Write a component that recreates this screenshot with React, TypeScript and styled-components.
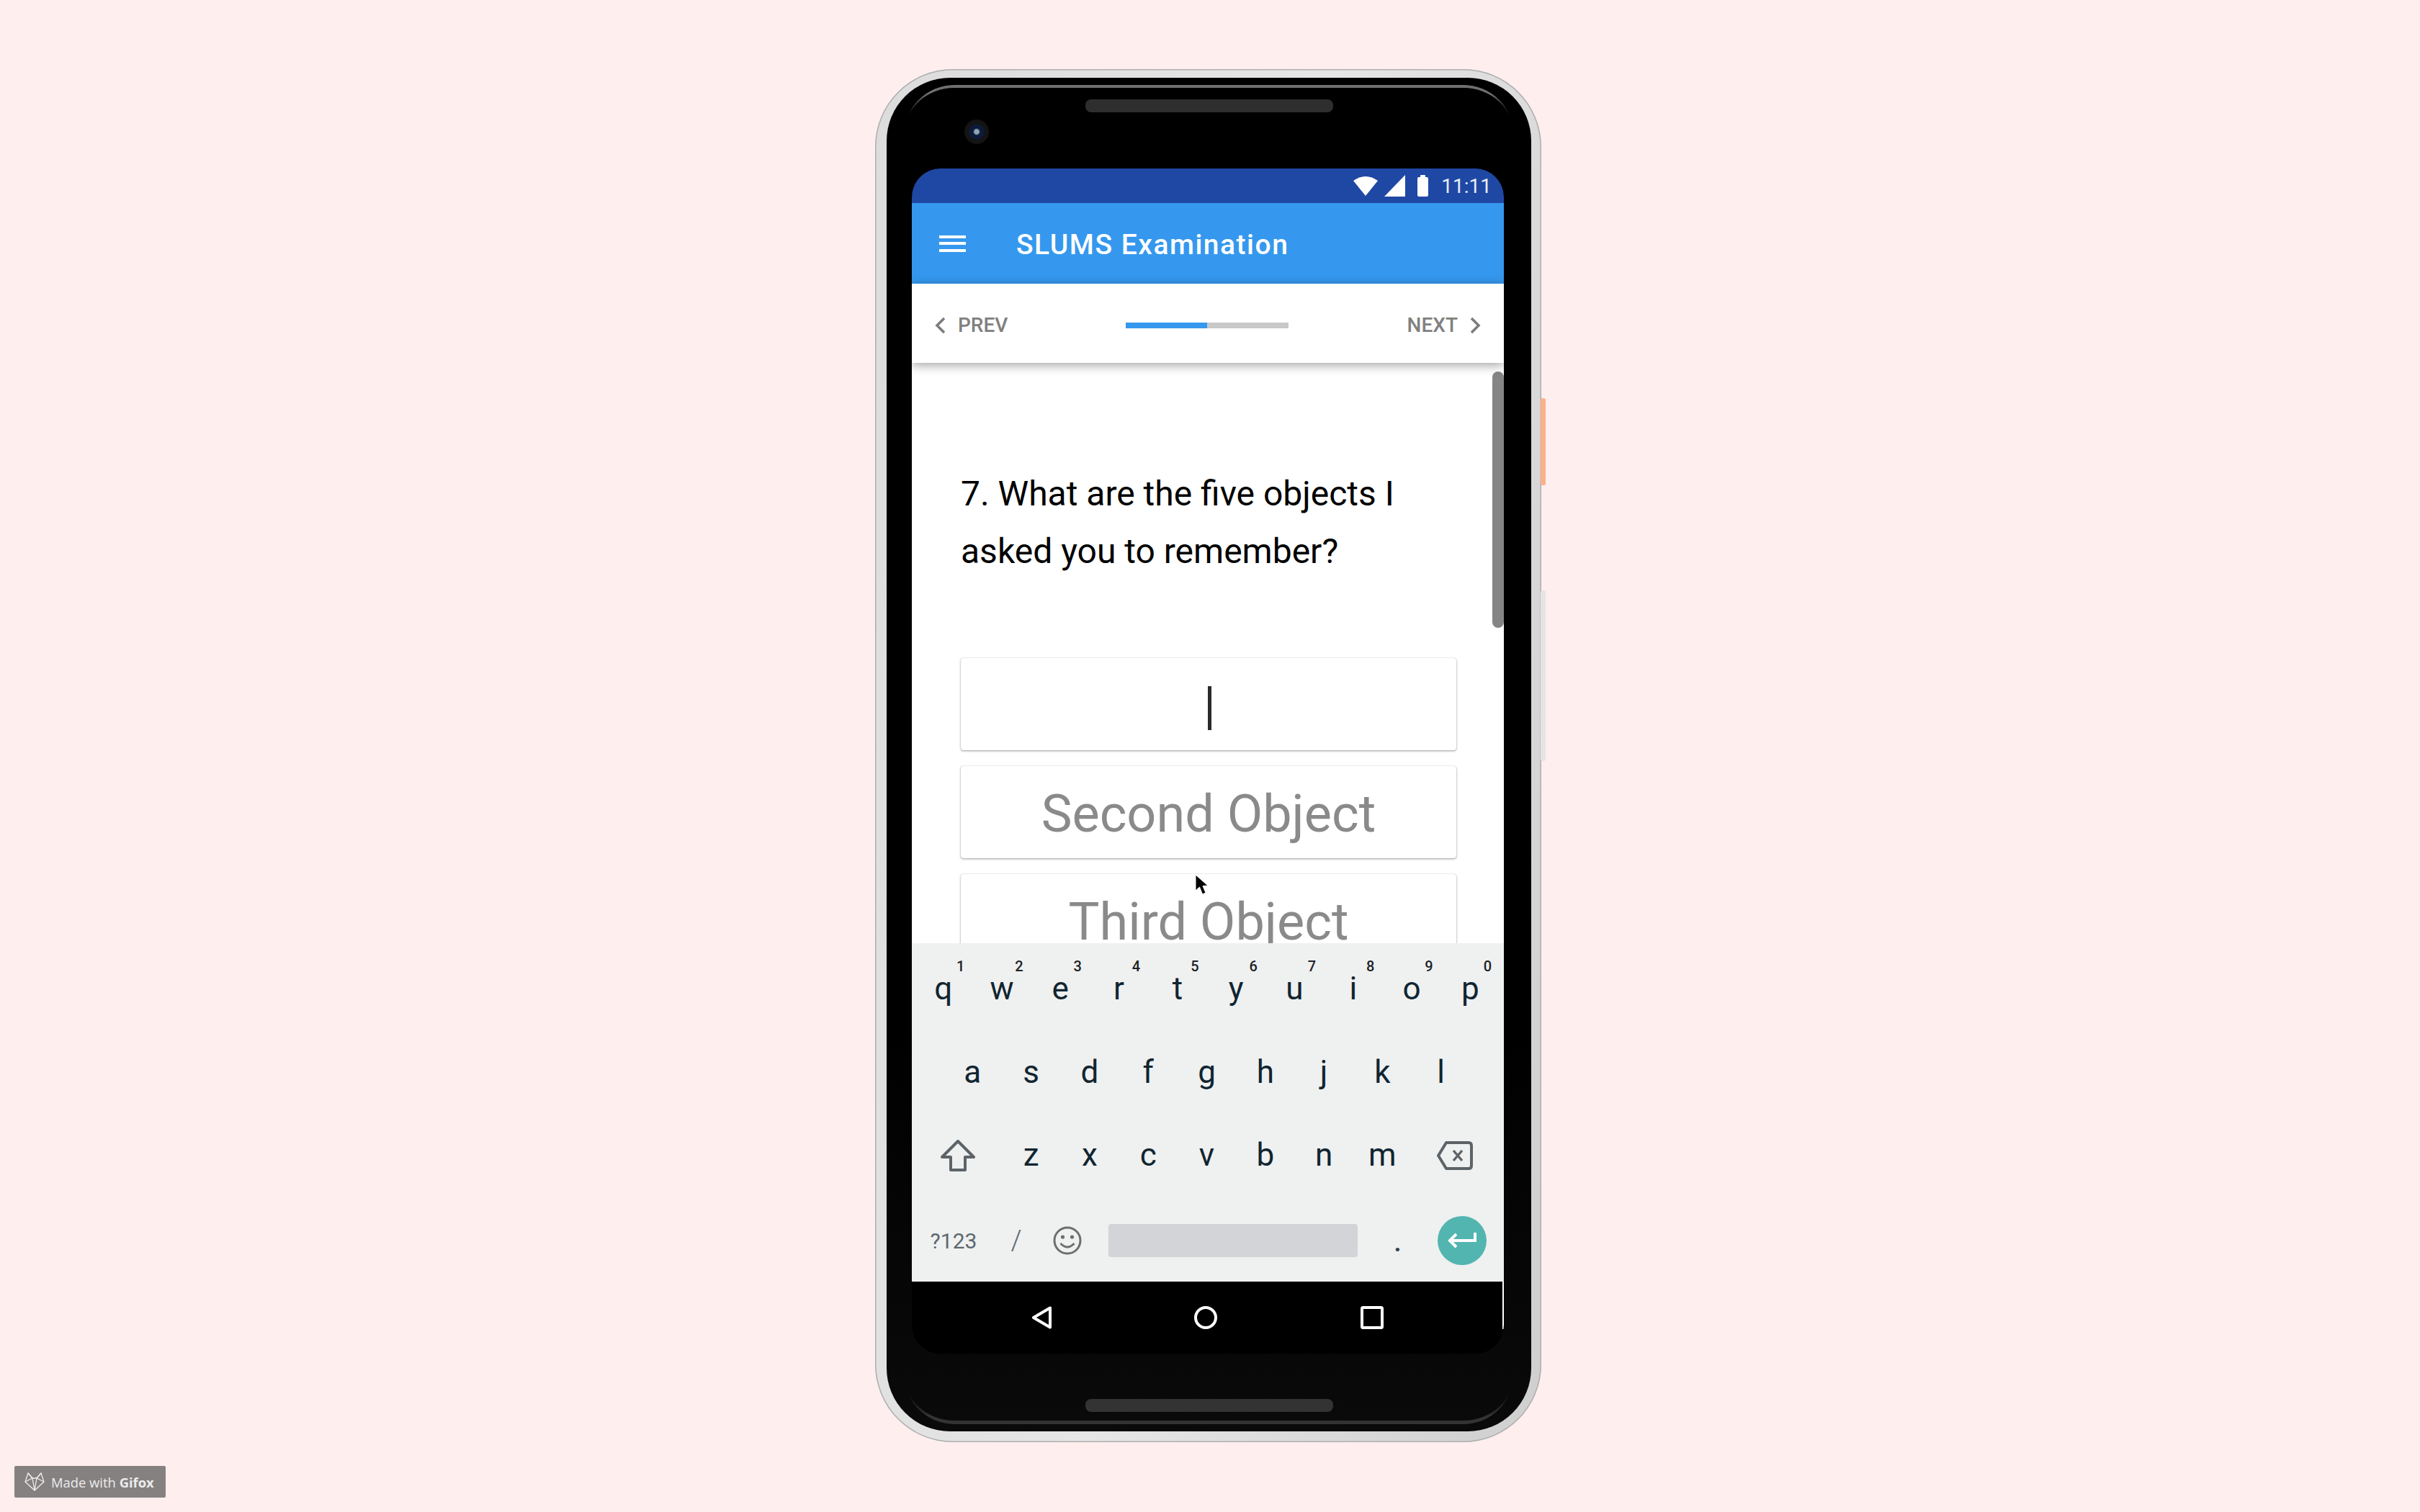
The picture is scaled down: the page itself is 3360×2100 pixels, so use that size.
import styled, { createGlobalStyle } from "styled-components";

const GlobalStyle = createGlobalStyle`
    html, body { margin: 0; padding: 0; background: #ffeeee; }
    * { box-sizing: border-box; }
`;

const Page = styled.div`
    position: relative;
    width: 3360px;
    height: 2100px;
    padding: 96px 0 0 1215px;
    background: #ffeeee;
    font-family: Roboto, "Liberation Sans", sans-serif;
    overflow: hidden;
`;

const Phone = styled.div`
    position: relative;
    width: 925px;
    height: 1907px;
    padding: 12px 14px 15px 16px;
    border-radius: 108px / 108px;
    background: linear-gradient(100deg, #dcdcdc 0%, #e6e6e6 50%, #cfcfcf 100%);
    box-shadow: inset 0 0 0 1.5px #aeaeae;
`;

const SideButton = styled.div<{ $top: number; $height: number; $color: string }>`
    position: absolute;
    right: -6px;
    top: ${(p) => p.$top}px;
    width: 7px;
    height: ${(p) => p.$height}px;
    border-radius: 3px;
    background: ${(p) => p.$color};
`;

const Bezel = styled.div`
    position: relative;
    height: 100%;
    border-radius: 88px;
    background: linear-gradient(180deg, #000 0%, #000 70%, #0a0a0a 100%);
    display: flex;
    flex-direction: column;
    align-items: center;
    overflow: hidden;
    &::before {
        content: "";
        position: absolute;
        top: 10px;
        left: 24px;
        right: 24px;
        height: 80px;
        border-top: 4px solid #707070;
        border-radius: 70px 70px 0 0;
        -webkit-mask-image: linear-gradient(180deg, #000 0, #000 12px, transparent 44px);
    }
    &::after {
        content: "";
        position: absolute;
        bottom: 10px;
        left: 24px;
        right: 24px;
        height: 80px;
        border-bottom: 5px solid #333;
        border-radius: 0 0 70px 70px;
        -webkit-mask-image: linear-gradient(0deg, #000 0, #000 12px, transparent 44px);
    }
`;

const TopBezel = styled.div`
    position: relative;
    width: 100%;
    height: 126px;
    flex: none;
    padding-top: 30px;
    display: flex;
    justify-content: center;
`;

const Speaker = styled.div<{ $color: string }>`
    width: 344px;
    height: 18px;
    border-radius: 8px;
    background: ${(p) => p.$color};
`;

const Camera = styled.div`
    position: absolute;
    left: 108px;
    top: 58px;
    width: 34px;
    height: 34px;
    border-radius: 50%;
    background: radial-gradient(circle, #8fa6b0 0 3px, #0c1a3a 5px 10px, #141414 11px 17px);
`;

const Screen = styled.div`
    width: 822px;
    height: 1646px;
    margin-left: -3px;
    flex: none;
    display: flex;
    flex-direction: column;
    border-radius: 40px;
    overflow: hidden;
    background: #000;
`;

const StatusBar = styled.div`
    height: 48px;
    flex: none;
    background: #1f48a4;
    display: flex;
    align-items: center;
    justify-content: flex-end;
    padding-right: 17px;
    color: #e8edf7;
    font-size: 28px;
`;

const StatusIcon = styled.svg<{ $gap: number }>`
    display: block;
    margin-right: ${(p) => p.$gap}px;
`;

const AppBar = styled.div`
    height: 112px;
    flex: none;
    background: #3598ee;
    display: flex;
    align-items: center;
    padding-left: 38px;
    color: #fff;
`;

const MenuIcon = styled.div`
    width: 37px;
    display: flex;
    flex-direction: column;
    gap: 5.5px;
    margin-right: 70px;
    span {
        display: block;
        height: 4px;
        background: #fff;
    }
`;

const Title = styled.div`
    padding-top: 3px;
    font-size: 39px;
    font-weight: 500;
    letter-spacing: 1.5px;
    white-space: nowrap;
`;

const NavRow = styled.div`
    position: relative;
    z-index: 2;
    height: 110px;
    flex: none;
    padding: 5px 32px 0;
    background: #fff;
    display: flex;
    align-items: center;
    justify-content: space-between;
    color: #808080;
    font-size: 28px;
    font-weight: 500;
    box-shadow: 0 3px 14px rgba(0, 0, 0, 0.38);
`;

const NavButton = styled.div`
    display: flex;
    align-items: center;
    gap: 16px;
    width: 140px;
`;

const NextButton = styled(NavButton)`
    justify-content: flex-end;
`;

const Progress = styled.div`
    width: 226px;
    height: 8px;
    margin-left: -3px;
    background: #c8c8c8;
`;

const ProgressFill = styled.div`
    height: 100%;
    background: #3598ee;
`;

const Content = styled.div`
    position: relative;
    flex: 1;
    min-height: 0;
    overflow: hidden;
    padding: 142px 66px 0 68px;
    background: #fff;
`;

const Scrollbar = styled.div`
    position: absolute;
    top: 12px;
    right: 0;
    width: 16px;
    height: 356px;
    border-radius: 8px;
    background: #858585;
`;

const Question = styled.div`
    font-size: 48px;
    line-height: 80px;
    color: #000;
    height: 160px;
    margin-bottom: 108px;
    white-space: nowrap;
`;

const Field = styled.div`
    height: 128px;
    margin-bottom: 22px;
    padding-top: 4px;
    border-radius: 4px;
    background: #fff;
    box-shadow: 0 1px 3px rgba(0, 0, 0, 0.4), 0 0 1px rgba(0, 0, 0, 0.2);
    display: flex;
    align-items: center;
    justify-content: center;
    color: #8a8a8a;
    font-size: 72px;
    white-space: nowrap;
`;

const Caret = styled.div`
    width: 5px;
    height: 61px;
    margin: 6px 0 0 2px;
    background: #2a2a2a;
`;

const Pointer = styled.svg`
    position: absolute;
    left: 393px;
    top: 710px;
`;

const Keyboard = styled.div`
    height: 470px;
    flex: none;
    padding-top: 6px;
    background: #eff0f0;
`;

const KeyRow = styled.div`
    height: 115.5px;
    padding-right: 3px;
    display: flex;
    justify-content: center;
`;

const Key = styled.div`
    position: relative;
    width: 81.3px;
    text-align: center;
    color: #102530;
    font-size: 44px;
    line-height: 115.5px;
`;

const Digit = styled.span`
    position: absolute;
    top: 14px;
    left: calc(50% + 24px);
    transform: translateX(-50%);
    color: #1c2226;
    font-size: 20px;
    font-weight: 500;
    line-height: 24px;
`;

const IconKey = styled.div<{ $shift?: number }>`
    width: 122.8px;
    padding-right: ${(p) => p.$shift || 0}px;
    display: flex;
    align-items: center;
    justify-content: center;
`;

const BottomRow = styled.div`
    display: flex;
    align-items: center;
    height: 117.5px;
    padding-top: 4px;
    color: #5d686e;
`;

const SymbolKey = styled.div`
    width: 116px;
    text-align: center;
    font-size: 30px;
`;

const SlashKey = styled.div`
    width: 58px;
    text-align: center;
    font-size: 38px;
    font-weight: 300;
`;

const EmojiKey = styled.div`
    width: 84px;
    margin-right: 14.5px;
    display: flex;
    justify-content: center;
`;

const SpaceBar = styled.div`
    width: 346.5px;
    height: 46px;
    border-radius: 4px;
    background: #d2d4d8;
`;

const DotKey = styled.div`
    width: 111px;
    text-align: center;
    color: #33434b;
    font-size: 38px;
    font-weight: 500;
    padding-top: 4px;
`;

const EnterKey = styled.div`
    width: 68px;
    height: 68px;
    border-radius: 50%;
    background: #52b5b0;
    display: flex;
    align-items: center;
    justify-content: center;
`;

const NavBar = styled.div`
    position: relative;
    height: 100px;
    flex: none;
    background: #000;
    display: flex;
    padding-top: 34px;
    align-items: flex-start;
    &::after {
        content: "";
        position: absolute;
        top: 0;
        right: 0;
        width: 2px;
        height: 66px;
        background: #fff;
    }
`;

const NavIcon = styled.svg<{ $left: number }>`
    display: block;
    margin-left: ${(p) => p.$left}px;
`;

const BottomBezel = styled.div`
    flex: 1;
    width: 100%;
    padding-top: 63px;
    display: flex;
    justify-content: center;
`;

const Badge = styled.div`
    position: absolute;
    left: 20px;
    top: 2036px;
    width: 210px;
    height: 44px;
    border-radius: 2px;
    background: #858181;
    color: #ececec;
    display: flex;
    align-items: center;
    padding-left: 13px;
    gap: 8px;
    font-family: "Open Sans", sans-serif;
    font-size: 18.4px;
    white-space: nowrap;
    b {
        font-weight: 700;
    }
`;

const Chevron = ({ left }: { left?: boolean }) => (
    <svg width="16" height="24" viewBox="0 0 16 24" fill="none">
        <polyline
            points={left ? "13,2 3,12 13,22" : "3,2 13,12 3,22"}
            stroke="#7d7d7d"
            strokeWidth="3.6"
        />
    </svg>
);

const rowOne = [["q", "1"], ["w", "2"], ["e", "3"], ["r", "4"], ["t", "5"], ["y", "6"], ["u", "7"], ["i", "8"], ["o", "9"], ["p", "0"]];
const rowTwo = ["a", "s", "d", "f", "g", "h", "j", "k", "l"];
const rowThree = ["z", "x", "c", "v", "b", "n", "m"];

const App = () => {
    return (
        <Page>
            <GlobalStyle />
            <Phone>
                <SideButton $top={457} $height={121} $color="#fbb08c" />
                <SideButton $top={724} $height={237} $color="#e4e4e4" />
                <Bezel>
                    <TopBezel>
                        <Speaker $color="#2e2e2e" />
                        <Camera />
                    </TopBezel>
                    <Screen>
                        <StatusBar>
                            <StatusIcon $gap={9} width="34" height="28" viewBox="0 0 34 28">
                                <path d="M0 7 Q17 -5 34 7 L17 28 Z" fill="#fff" />
                            </StatusIcon>
                            <StatusIcon $gap={17} width="29" height="30" viewBox="0 0 29 30">
                                <polygon points="29,0 29,30 0,30" fill="#fff" />
                            </StatusIcon>
                            <StatusIcon $gap={18} width="15" height="30" viewBox="0 0 15 30">
                                <path d="M4 3 V1 Q4 0 5 0 H10 Q11 0 11 1 V3 H13 Q15 3 15 5 V28 Q15 30 13 30 H2 Q0 30 0 28 V5 Q0 3 2 3 Z" fill="#fff" />
                            </StatusIcon>
                            11:11
                        </StatusBar>
                        <AppBar>
                            <MenuIcon>
                                <span />
                                <span />
                                <span />
                            </MenuIcon>
                            <Title>SLUMS Examination</Title>
                        </AppBar>
                        <NavRow>
                            <NavButton>
                                <Chevron left />
                                PREV
                            </NavButton>
                            <Progress>
                                <ProgressFill style={{ width: "50%" }} />
                            </Progress>
                            <NextButton>
                                NEXT
                                <Chevron />
                            </NextButton>
                        </NavRow>
                        <Content>
                            <Scrollbar />
                            <Question>
                                7. What are the five objects I
                                <br />
                                asked you to remember?
                            </Question>
                            <Field>
                                <Caret />
                            </Field>
                            <Field>Second Object</Field>
                            <Field>Third Object</Field>
                            <Pointer width="22" height="30" viewBox="0 0 22 30">
                                <path d="M1 1 L1 23 L6.5 18 L10.5 28 L15 26 L11 16.5 L18 16 Z" fill="#000" stroke="#fff" strokeWidth="1" />
                            </Pointer>
                        </Content>
                        <Keyboard>
                            <KeyRow>
                                {rowOne.map(([letter, digit]) => (
                                    <Key key={letter}>
                                        {letter}
                                        <Digit>{digit}</Digit>
                                    </Key>
                                ))}
                            </KeyRow>
                            <KeyRow>
                                {rowTwo.map((letter) => (
                                    <Key key={letter}>{letter}</Key>
                                ))}
                            </KeyRow>
                            <KeyRow>
                                <IconKey>
                                    <svg width="48" height="44" viewBox="0 0 48 44" fill="none">
                                        <path d="M24 2 L46 24 H34 V42 H14 V24 H2 Z" stroke="#5c6468" strokeWidth="4" strokeLinejoin="round" />
                                    </svg>
                                </IconKey>
                                {rowThree.map((letter) => (
                                    <Key key={letter}>{letter}</Key>
                                ))}
                                <IconKey $shift={3}>
                                    <svg width="50" height="40" viewBox="0 0 50 40" fill="none">
                                        <path d="M13 2 H44 Q48 2 48 6 V34 Q48 38 44 38 H13 L2 20 Z" stroke="#5c6468" strokeWidth="4" strokeLinejoin="round" />
                                        <path d="M23 13 L35 27 M35 13 L23 27" stroke="#5c6468" strokeWidth="3.4" />
                                    </svg>
                                </IconKey>
                            </KeyRow>
                            <BottomRow>
                                <SymbolKey>?123</SymbolKey>
                                <SlashKey>/</SlashKey>
                                <EmojiKey>
                                    <svg width="40" height="40" viewBox="0 0 40 40" fill="none">
                                        <circle cx="20" cy="20" r="18" stroke="#6e6e6e" strokeWidth="3" />
                                        <circle cx="13.5" cy="15" r="2.6" fill="#6e6e6e" />
                                        <circle cx="26.5" cy="15" r="2.6" fill="#6e6e6e" />
                                        <path d="M10.5 24 Q20 34 29.5 24" stroke="#6e6e6e" strokeWidth="3" />
                                    </svg>
                                </EmojiKey>
                                <SpaceBar />
                                <DotKey>.</DotKey>
                                <EnterKey>
                                    <svg width="40" height="24" viewBox="0 0 40 24" fill="none">
                                        <path d="M38 1 V12 H4" stroke="#fff" strokeWidth="4" />
                                        <path d="M12 3 L3 12 L12 21" stroke="#fff" strokeWidth="4" />
                                    </svg>
                                </EnterKey>
                            </BottomRow>
                        </Keyboard>
                        <NavBar>
                            <NavIcon $left={166} width="30" height="32" viewBox="0 0 30 32" fill="none">
                                <path d="M26 2.5 V29.5 L3 16 Z" stroke="#fff" strokeWidth="4" strokeLinejoin="round" />
                            </NavIcon>
                            <NavIcon $left={196} width="32" height="32" viewBox="0 0 32 32" fill="none">
                                <circle cx="16" cy="16" r="14" stroke="#fff" strokeWidth="4" />
                            </NavIcon>
                            <NavIcon $left={199} width="32" height="32" viewBox="0 0 32 32" fill="none">
                                <rect x="2" y="2" width="28" height="28" rx="1.5" stroke="#fff" strokeWidth="4" />
                            </NavIcon>
                        </NavBar>
                    </Screen>
                    <BottomBezel>
                        <Speaker $color="#333333" />
                    </BottomBezel>
                </Bezel>
            </Phone>
            <Badge>
                <svg width="30" height="28" viewBox="0 0 30 28" fill="none" stroke="#ececec" strokeWidth="1.3">
                    <path d="M6 2 L2 14 L15 26 L28 14 L24 2 L18 9 H12 Z" />
                    <path d="M2 14 L12 9 L15 26 L18 9 L28 14 M6 2 L12 9 M24 2 L18 9" />
                </svg>
                <span>
                    Made with <b>Gifox</b>
                </span>
            </Badge>
        </Page>
    );
};

export default App;
